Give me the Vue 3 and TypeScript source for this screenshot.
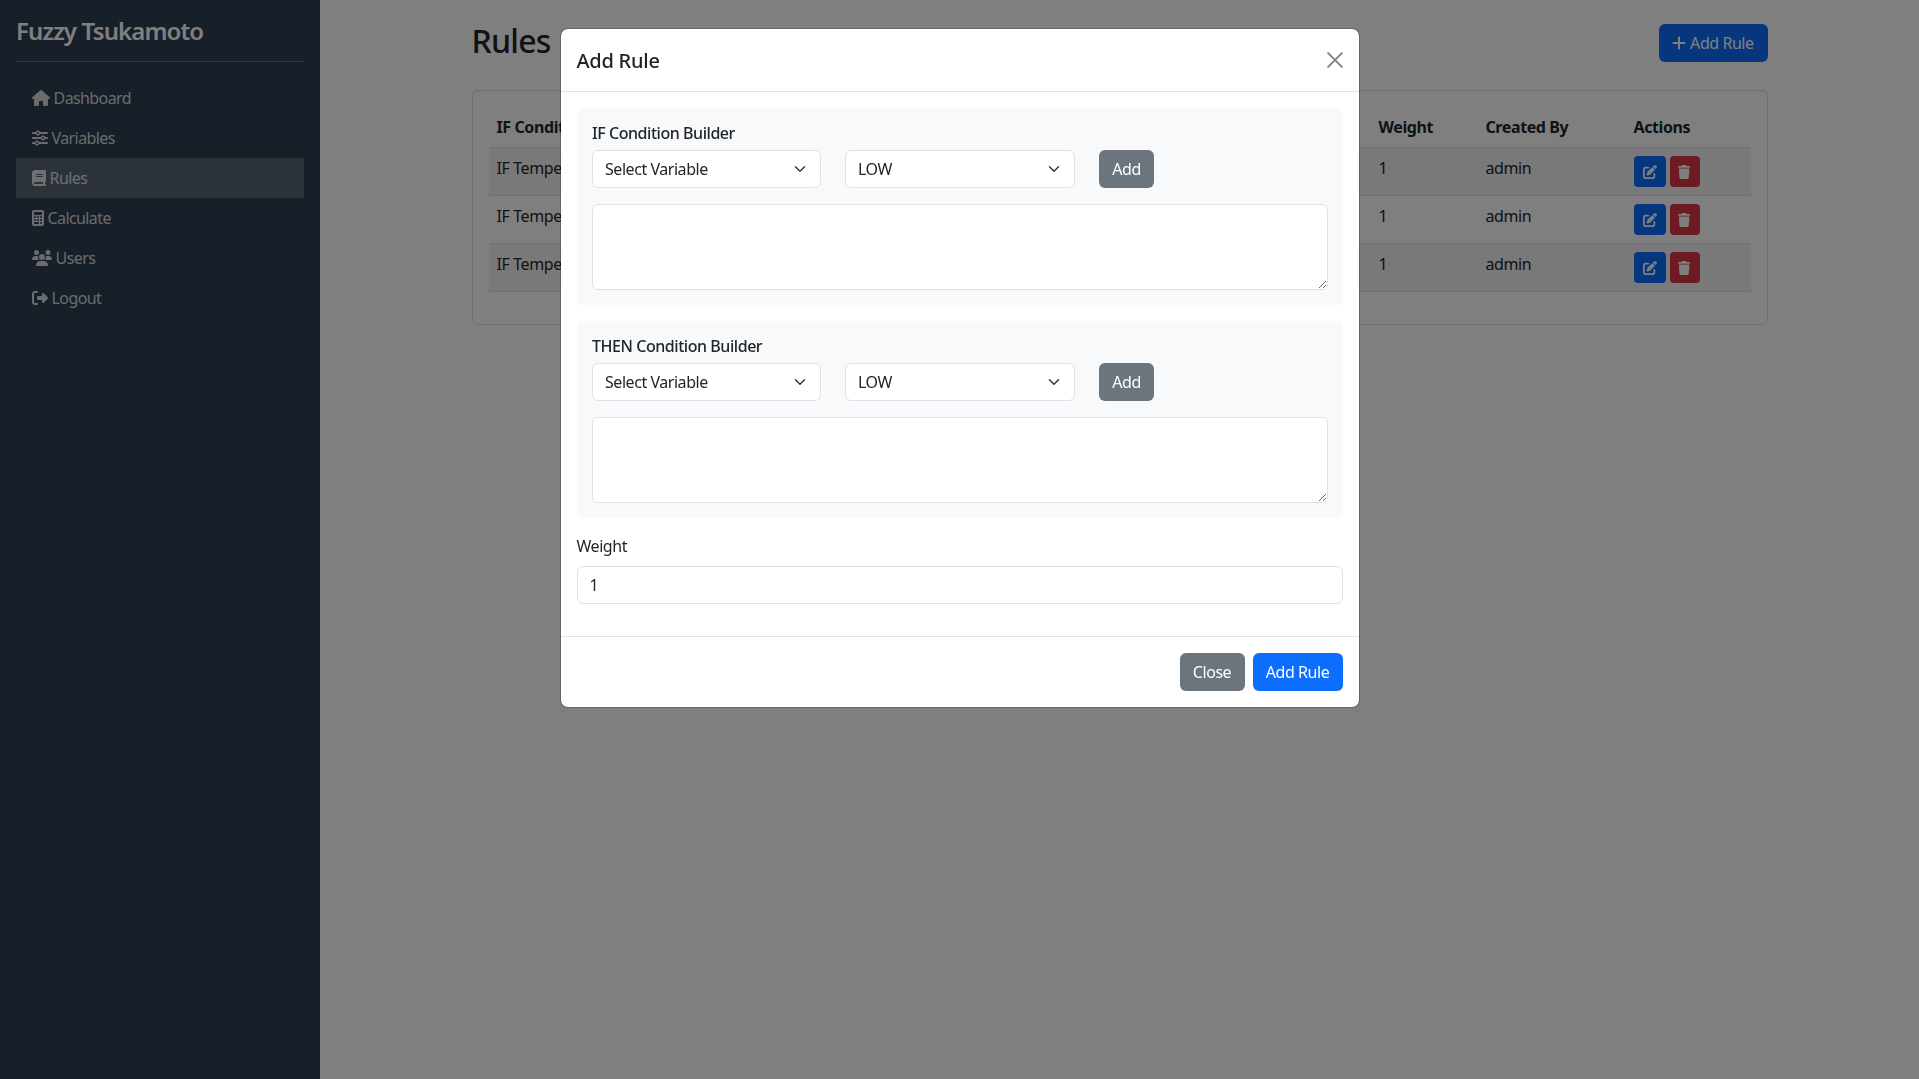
<script setup lang="ts">
import { ref } from 'vue';

const menu = [
  { label: 'Dashboard', icon: 'home', active: false },
  { label: 'Variables', icon: 'sliders', active: false },
  { label: 'Rules', icon: 'book', active: true },
  { label: 'Calculate', icon: 'calculator', active: false },
  { label: 'Users', icon: 'users', active: false },
  { label: 'Logout', icon: 'logout', active: false }
];

const rules = [
  { id: 1, cond: 'IF Temperature IS LOW AND Humidity IS LOW', then: 'THEN Fan Speed IS LOW', weight: 1, by: 'admin' },
  { id: 2, cond: 'IF Temperature IS MEDIUM AND Humidity IS LOW', then: 'THEN Fan Speed IS MEDIUM', weight: 1, by: 'admin' },
  { id: 3, cond: 'IF Temperature IS HIGH AND Humidity IS LOW', then: 'THEN Fan Speed IS HIGH', weight: 1, by: 'admin' }
];

const builders = [
  { id: 'if', title: 'IF Condition Builder' },
  { id: 'then', title: 'THEN Condition Builder' }
];

const weight = ref(1);
</script>

<template>
  <div class="layout">
    <aside class="sidebar">
      <h4 class="brand">Fuzzy Tsukamoto</h4>
      <hr class="brand-line" />
      <nav class="menu">
        <a v-for="item in menu" :key="item.label" class="menu-link" :class="{ active: item.active }" href="#">
          <svg v-if="item.icon === 'home'" class="ic" viewBox="0 0 576 512"><path d="M575.8 255.5c0 18-15 32.1-32 32.1h-32l.7 160.2c0 2.7-.2 5.4-.5 8.1V472c0 22.1-17.9 40-40 40H456c-1.1 0-2.2 0-3.3-.1c-1.4 .1-2.8 .1-4.2 .1H416 392c-22.1 0-40-17.9-40-40V448 384c0-17.7-14.3-32-32-32H256c-17.7 0-32 14.3-32 32v64 24c0 22.1-17.9 40-40 40H160 128.1c-1.5 0-3-.1-4.5-.2c-1.2 .1-2.4 .2-3.6 .2H104c-22.1 0-40-17.9-40-40V360c0-.9 0-1.9 .1-2.8V287.6H32c-18 0-32-14-32-32.1c0-9 3-17 10-24L266.4 8c7-7 15-8 22-8s15 2 21 7L564.8 231.5c8 7 12 15 11 24z" /></svg>
          <svg v-else-if="item.icon === 'sliders'" class="ic" viewBox="0 0 512 512"><path d="M0 416c0 17.7 14.3 32 32 32l54.7 0c12.3 28.3 40.5 48 73.3 48s61-19.7 73.3-48L480 448c17.7 0 32-14.3 32-32s-14.3-32-32-32l-246.7 0c-12.3-28.3-40.5-48-73.3-48s-61 19.7-73.3 48L32 384c-17.7 0-32 14.3-32 32zm128 0a32 32 0 1 1 64 0 32 32 0 1 1 -64 0zM320 256a32 32 0 1 1 64 0 32 32 0 1 1 -64 0zm32-80c-32.8 0-61 19.7-73.3 48L32 224c-17.7 0-32 14.3-32 32s14.3 32 32 32l246.7 0c12.3 28.3 40.5 48 73.3 48s61-19.7 73.3-48l54.7 0c17.7 0 32-14.3 32-32s-14.3-32-32-32l-54.7 0c-12.3-28.3-40.5-48-73.3-48zM192 128a32 32 0 1 1 0-64 32 32 0 1 1 0 64zm73.3-64C253 35.7 224.8 16 192 16s-61 19.7-73.3 48L32 64C14.3 64 0 78.3 0 96s14.3 32 32 32l86.7 0c12.3 28.3 40.5 48 73.3 48s61-19.7 73.3-48L480 128c17.7 0 32-14.3 32-32s-14.3-32-32-32L265.3 64z" /></svg>
          <svg v-else-if="item.icon === 'book'" class="ic" viewBox="0 0 448 512"><path d="M96 0C43 0 0 43 0 96V416c0 53 43 96 96 96H384h32c17.7 0 32-14.3 32-32s-14.3-32-32-32V384c17.7 0 32-14.3 32-32V32c0-17.7-14.3-32-32-32H384 96zm0 384H352v64H96c-17.7 0-32-14.3-32-32s14.3-32 32-32zm32-240c0-8.8 7.2-16 16-16H336c8.8 0 16 7.2 16 16s-7.2 16-16 16H144c-8.8 0-16-7.2-16-16zm16 48H336c8.8 0 16 7.2 16 16s-7.2 16-16 16H144c-8.8 0-16-7.2-16-16s7.2-16 16-16z" /></svg>
          <svg v-else-if="item.icon === 'calculator'" class="ic" viewBox="0 0 384 512"><path d="M64 0C28.7 0 0 28.7 0 64V448c0 35.3 28.7 64 64 64H320c35.3 0 64-28.7 64-64V64c0-35.3-28.7-64-64-64H64zM96 64H288c17.7 0 32 14.3 32 32v32c0 17.7-14.3 32-32 32H96c-17.7 0-32-14.3-32-32V96c0-17.7 14.3-32 32-32zm32 160a32 32 0 1 1 -64 0 32 32 0 1 1 64 0zM96 352a32 32 0 1 1 0-64 32 32 0 1 1 0 64zM64 416c0-17.7 14.3-32 32-32h96c17.7 0 32 14.3 32 32s-14.3 32-32 32H96c-17.7 0-32-14.3-32-32zM192 256a32 32 0 1 1 0-64 32 32 0 1 1 0 64zm32 64a32 32 0 1 1 -64 0 32 32 0 1 1 64 0zm64-64a32 32 0 1 1 0-64 32 32 0 1 1 0 64zm32 64a32 32 0 1 1 -64 0 32 32 0 1 1 64 0zM288 448a32 32 0 1 1 0-64 32 32 0 1 1 0 64z" /></svg>
          <svg v-else-if="item.icon === 'users'" class="ic" viewBox="0 0 640 512"><path d="M144 0a80 80 0 1 1 0 160A80 80 0 1 1 144 0zM512 0a80 80 0 1 1 0 160A80 80 0 1 1 512 0zM0 298.7C0 239.8 47.8 192 106.7 192h42.7c15.9 0 31 3.5 44.6 9.7c-1.3 7.2-1.9 14.7-1.9 22.3c0 38.2 16.8 72.5 43.3 96c-.2 0-.4 0-.7 0H21.3C9.6 320 0 310.4 0 298.7zM405.3 320c-.2 0-.4 0-.7 0c26.6-23.5 43.3-57.8 43.3-96c0-7.6-.7-15-1.9-22.3c13.6-6.3 28.7-9.7 44.6-9.7h42.7C592.2 192 640 239.8 640 298.7c0 11.8-9.6 21.3-21.3 21.3H405.3zM224 224a96 96 0 1 1 192 0 96 96 0 1 1 -192 0zM128 485.3C128 411.7 187.7 352 261.3 352H378.7C452.3 352 512 411.7 512 485.3c0 14.7-11.9 26.7-26.7 26.7H154.7c-14.7 0-26.7-11.9-26.7-26.7z" /></svg>
          <svg v-else class="ic" viewBox="0 0 512 512"><path d="M377.9 105.9L500.7 228.7c7.2 7.2 11.3 17.1 11.3 27.3s-4.1 20.1-11.3 27.3L377.9 406.1c-6.4 6.4-15 9.9-24 9.9c-18.7 0-33.9-15.2-33.9-33.9l0-62.1-128 0c-17.7 0-32-14.3-32-32l0-64c0-17.7 14.3-32 32-32l128 0 0-62.1c0-18.7 15.2-33.9 33.9-33.9c9 0 17.6 3.6 24 9.9zM160 96L96 96c-17.7 0-32 14.3-32 32l0 256c0 17.7 14.3 32 32 32l64 0c17.7 0 32 14.3 32 32s-14.3 32-32 32l-64 0c-53 0-96-43-96-96L0 128C0 75 43 32 96 32l64 0c17.7 0 32 14.3 32 32s-14.3 32-32 32z" /></svg>
          {{ item.label }}
        </a>
      </nav>
    </aside>

    <main class="main">
      <div class="container">
        <header class="page-head">
          <h2 class="page-title">Rules</h2>
          <button class="btn btn-primary btn-new">
            <svg class="ic" viewBox="0 0 448 512"><path d="M256 80c0-17.7-14.3-32-32-32s-32 14.3-32 32V224H48c-17.7 0-32 14.3-32 32s14.3 32 32 32H192V432c0 17.7 14.3 32 32 32s32-14.3 32-32V288H400c17.7 0 32-14.3 32-32s-14.3-32-32-32H256V80z" /></svg>
            Add Rule
          </button>
        </header>

        <section class="card">
          <table class="rules-table">
            <colgroup>
              <col class="c-if" />
              <col />
              <col class="c-weight" />
              <col class="c-by" />
              <col class="c-actions" />
            </colgroup>
            <thead>
              <tr>
                <th>IF Condition</th>
                <th>THEN Condition</th>
                <th>Weight</th>
                <th>Created By</th>
                <th>Actions</th>
              </tr>
            </thead>
            <tbody>
              <tr v-for="rule in rules" :key="rule.id">
                <td>{{ rule.cond }}</td>
                <td>{{ rule.then }}</td>
                <td>{{ rule.weight }}</td>
                <td>{{ rule.by }}</td>
                <td>
                  <div class="actions">
                    <button class="btn-sm edit" aria-label="Edit">
                      <svg class="ic" viewBox="0 0 512 512"><path d="M471.6 21.7c-21.9-21.9-57.3-21.9-79.2 0L362.3 51.7l97.9 97.9 30.1-30.1c21.9-21.9 21.9-57.3 0-79.2L471.6 21.7zm-299.2 220c-6.1 6.1-10.8 13.6-13.5 21.9l-29.6 88.8c-2.9 8.6-.6 18.1 5.8 24.6s15.9 8.7 24.6 5.8l88.8-29.6c8.2-2.7 15.7-7.4 21.9-13.5L437.7 172.3 339.7 74.3 172.4 241.7zM96 64C43 64 0 107 0 160V416c0 53 43 96 96 96H352c53 0 96-43 96-96V320c0-17.7-14.3-32-32-32s-32 14.3-32 32v96c0 17.7-14.3 32-32 32H96c-17.7 0-32-14.3-32-32V160c0-17.7 14.3-32 32-32h96c17.7 0 32-14.3 32-32s-14.3-32-32-32H96z" /></svg>
                    </button>
                    <button class="btn-sm del" aria-label="Delete">
                      <svg class="ic" viewBox="0 0 448 512"><path d="M135.2 17.7L128 32H32C14.3 32 0 46.3 0 64S14.3 96 32 96H416c17.7 0 32-14.3 32-32s-14.3-32-32-32H320l-7.2-14.3C307.4 6.8 296.3 0 284.2 0H163.8c-12.1 0-23.2 6.8-28.6 17.7zM416 128H32L53.2 467c1.6 25.3 22.6 45 47.9 45H346.9c25.3 0 46.3-19.7 47.9-45L416 128z" /></svg>
                    </button>
                  </div>
                </td>
              </tr>
            </tbody>
          </table>
        </section>
      </div>
    </main>

    <div class="backdrop"></div>

    <div class="modal">
      <div class="dialog">
        <div class="dialog-head">
          <h5 class="dialog-title">Add Rule</h5>
          <button class="close" aria-label="Close">
            <svg viewBox="0 0 16 16"><path d="M.5.5l15 15M15.5.5l-15 15" fill="none" stroke="currentColor" stroke-width="1.8" /></svg>
          </button>
        </div>

        <div class="dialog-body">
          <div v-for="b in builders" :key="b.id" class="builder">
            <label class="builder-label">{{ b.title }}</label>
            <div class="builder-row">
              <select class="field select">
                <option>Select Variable</option>
              </select>
              <select class="field select">
                <option>LOW</option>
                <option>MEDIUM</option>
                <option>HIGH</option>
              </select>
              <button class="btn btn-secondary btn-add">Add</button>
            </div>
            <textarea class="field area" rows="3"></textarea>
          </div>

          <label class="weight-label">Weight</label>
          <input v-model="weight" class="field weight" type="text" />
        </div>

        <div class="dialog-foot">
          <button class="btn btn-secondary btn-close">Close</button>
          <button class="btn btn-blue btn-save">Add Rule</button>
        </div>
      </div>
    </div>
  </div>
</template>

<style>
html,
body {
  margin: 0;
  background: #fff;
}

body {
  font-family: 'Noto Sans', sans-serif;
  font-size: 16px;
  line-height: 1.5;
  color: #212529;
}
</style>

<style scoped>
* {
  box-sizing: border-box;
}

.layout {
  display: flex;
  min-height: 100vh;
}

.sidebar {
  width: 320px;
  flex: none;
  padding: 16px;
  background: #2f3f52;
  color: #fff;
}

.brand {
  margin: 0;
  font-size: 24px;
  line-height: 30.8px;
  font-weight: 600;
  letter-spacing: -0.9px;
}

.brand-line {
  margin: 14px 0 16px;
  border: 0;
  border-top: 1px solid rgba(255, 255, 255, 0.25);
}

.menu {
  display: flex;
  flex-direction: column;
}

.menu-link {
  height: 40px;
  padding: 8px 16px;
  color: rgba(255, 255, 255, 0.8);
  text-decoration: none;
  letter-spacing: -0.6px;
}

.menu-link.active {
  background: rgba(255, 255, 255, 0.2);
}

.ic {
  display: inline-block;
  height: 16px;
  width: auto;
  vertical-align: -2px;
  fill: currentColor;
}

.main {
  flex: 1;
  min-width: 0;
}

.container {
  max-width: 1320px;
  margin: 0 auto;
  padding: 0 12px;
}

.page-head {
  display: flex;
  justify-content: space-between;
  align-items: center;
  padding-top: 24px;
  margin-bottom: 28px;
}

.page-title {
  margin: 0 0 5px;
  font-size: 32px;
  line-height: 33px;
  font-weight: 500;
  letter-spacing: -0.75px;
}

.btn {
  height: 38px;
  padding: 0;
  border: 1px solid transparent;
  border-radius: 6px;
  font: inherit;
  letter-spacing: -0.45px;
  color: #fff;
}

.btn-new {
  width: 109px;
}

.btn-add {
  width: 55px;
}

.btn-close {
  width: 65px;
}

.btn-save {
  width: 90px;
}

.btn-primary,
.btn-blue {
  background: #0d6efd;
}

.btn-secondary {
  background: #6c757d;
}

.card {
  padding: 16px;
  border: 1px solid #dfdfdf;
  border-radius: 6px;
}

.rules-table {
  width: 100%;
  margin-bottom: 16px;
  border-collapse: collapse;
  table-layout: fixed;
  letter-spacing: -0.4px;
}

.c-if {
  width: 441px;
}

.c-weight {
  width: 107px;
}

.c-by {
  width: 148px;
}

.c-actions {
  width: 125px;
}

.rules-table th,
.rules-table td {
  padding: 8px;
  text-align: left;
  vertical-align: top;
  border-bottom: 1px solid #dee2e6;
}

.rules-table th {
  font-weight: 700;
}

.rules-table tbody tr:nth-child(odd) td {
  background: rgba(0, 0, 0, 0.05);
}

.actions {
  display: flex;
  gap: 4px;
}

.btn-sm {
  display: flex;
  align-items: center;
  justify-content: center;
  height: 31px;
  padding: 0;
  border: 0;
  border-radius: 4px;
  color: #fff;
}

.btn-sm .ic {
  height: 14px;
}

.edit {
  width: 32px;
  background: #0d6efd;
}

.del {
  width: 30px;
  background: #dc3545;
}

.backdrop {
  position: fixed;
  inset: 0;
  background: rgba(0, 0, 0, 0.5);
}

.modal {
  position: fixed;
  inset: 0;
}

.dialog {
  width: 800px;
  margin: 28px auto 0;
  border: 1px solid rgba(0, 0, 0, 0.2);
  border-radius: 8px;
  background: #fff;
  background-clip: padding-box;
}

.dialog-head {
  display: flex;
  justify-content: space-between;
  align-items: center;
  padding: 16px;
  border-bottom: 1px solid #dee2e6;
}

.dialog-title {
  margin: 0;
  padding-top: 2px;
  font-size: 20px;
  line-height: 28px;
  font-weight: 500;
  letter-spacing: -0.25px;
}

.close {
  display: flex;
  width: 16px;
  height: 16px;
  padding: 0;
  border: 0;
  background: none;
  color: #7f7f7f;
}

.dialog-body {
  padding: 16px;
}

.builder {
  margin-bottom: 16px;
  padding: 16px 15px 15px 15.5px;
  border-radius: 6px;
  background: #f8f9fa;
}

.builder-label {
  display: block;
  height: 26px;
  line-height: 18px;
  font-weight: 500;
  letter-spacing: -0.45px;
}

.builder-row {
  display: grid;
  grid-template-columns: 229px 230px auto;
  justify-content: start;
  gap: 24px;
  margin-bottom: 16px;
}

.field {
  display: block;
  width: 100%;
  padding: 6px 12px;
  border: 1px solid #dee2e6;
  border-radius: 6px;
  background-color: #fff;
  font: inherit;
  letter-spacing: -0.45px;
  color: #212529;
  outline: none;
}

.select {
  height: 38px;
  appearance: none;
  padding-right: 36px;
  background-image: url("data:image/svg+xml,%3csvg xmlns='http://www.w3.org/2000/svg' viewBox='0 0 16 16'%3e%3cpath fill='none' stroke='%23343a40' stroke-linecap='round' stroke-linejoin='round' stroke-width='2' d='m2 5 6 6 6-6'/%3e%3c/svg%3e");
  background-repeat: no-repeat;
  background-position: right 12px center;
  background-size: 16px 12px;
}

.area {
  height: 86px;
  resize: vertical;
}

.weight-label {
  display: block;
  margin-bottom: 8px;
  letter-spacing: -0.45px;
}

.weight {
  height: 38px;
  margin-bottom: 16px;
}

.dialog-foot {
  display: flex;
  justify-content: flex-end;
  gap: 8px;
  padding: 16px;
  border-top: 1px solid #dee2e6;
}
</style>
